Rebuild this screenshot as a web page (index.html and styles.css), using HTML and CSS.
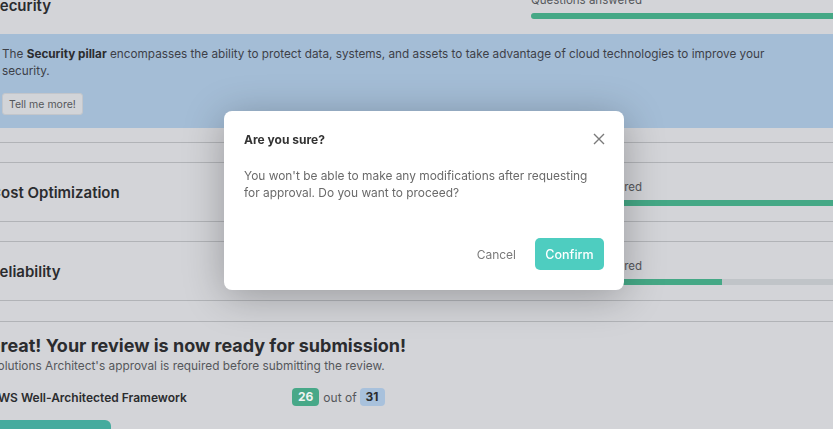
FILE: index.html
```html
<!DOCTYPE html>
<html>
<head>
<meta charset="utf-8">
<link rel="stylesheet" href="styles.css">
</head>
<body>
<div class="page">
  <section class="pillar">
    <div class="pillar-head">
      <h2 class="pillar-title">Security</h2>
      <div class="progress">
        <div class="progress-label">Questions answered</div>
        <div class="track"><div class="fill" style="width:100%"></div></div>
      </div>
    </div>
    <div class="pillar-body">
      <div class="info">
        <p class="info-text">The <b>Security pillar</b> encompasses the ability to protect data, systems, and assets to take advantage of cloud technologies to improve your security.</p>
        <button class="more">Tell me more!</button>
      </div>
    </div>
  </section>
  <section class="pillar">
    <div class="pillar-head">
      <h2 class="pillar-title">Cost Optimization</h2>
      <div class="progress">
        <div class="progress-label">Questions answered</div>
        <div class="track"><div class="fill" style="width:100%"></div></div>
      </div>
    </div>
  </section>
  <section class="pillar">
    <div class="pillar-head">
      <h2 class="pillar-title">Reliability</h2>
      <div class="progress">
        <div class="progress-label">Questions answered</div>
        <div class="track"><div class="fill" style="width:58%"></div></div>
      </div>
    </div>
  </section>
  <section class="summary">
    <h1 class="summary-title">Great! Your review is now ready for submission!</h1>
    <p class="summary-note">Solutions Architect's approval is required before submitting the review.</p>
    <div class="score-row">
      <span class="fw-name">AWS Well-Architected Framework</span>
      <span class="badge badge-green">26</span>
      <span class="out-of">out of</span>
      <span class="badge badge-blue">31</span>
    </div>
    <button class="request">Request for approval</button>
  </section>
</div>

<div class="modal">
  <div class="modal-head">
    <h3 class="modal-title">Are you sure?</h3>
    <svg class="close" width="12" height="12" viewBox="0 0 12 12"><path d="M1 1L11 11M11 1L1 11" stroke="#7a7a7a" stroke-width="1.4" fill="none"/></svg>
  </div>
  <p class="modal-text">You won't be able to make any modifications after requesting for approval. Do you want to proceed?</p>
  <div class="modal-foot">
    <button class="btn-cancel">Cancel</button>
    <button class="btn-confirm">Confirm</button>
  </div>
</div>
</body>
</html>
```

FILE: styles.css
```css
* { box-sizing: border-box; }

body {
  margin: 0;
  width: 833px;
  height: 429px;
  overflow: hidden;
  background: #d3d4d8;
  font-family: Inter, "Open Sans", sans-serif;
  color: #2b2c2f;
}

.page {
  margin: -25px 0 0 -10px;
  width: 880px;
}

.pillar {
  border-top: 1px solid #b1b3b7;
  border-bottom: 1px solid #b1b3b7;
  margin-bottom: 19px;
}

.pillar-head {
  height: 58px;
  display: grid;
  grid-template-columns: 541px 330px;
  align-items: center;
}

.pillar-title {
  margin: 0;
  font-size: 15px;
  font-weight: 600;
  color: #2b2c2f;
}

.progress-label {
  font-size: 11.5px;
  line-height: 16px;
  color: #55575b;
  margin-bottom: 5px;
}

.track {
  height: 6px;
  background: #c0c4c8;
  border-radius: 3px 0 0 3px;
  overflow: hidden;
}

.fill {
  height: 100%;
  background: #45a886;
}

.pillar-body {
  padding-bottom: 14px;
}

.info {
  background: #a4bdd6;
  padding: 12px 12px 13px 12px;
}

.info-text {
  margin: 0;
  font-size: 11.75px;
  line-height: 17px;
  color: #3d4048;
  max-width: 775px;
}

.info-text b {
  font-weight: 700;
  color: #2b2c2f;
}

.more {
  margin-top: 13px;
  height: 22px;
  padding: 0 6px;
  background: #d2d4d8;
  border: 1px solid #c3c6cb;
  border-radius: 3px;
  font-family: inherit;
  font-size: 10.5px;
  color: #55575b;
}

.summary {
  border-top: 1px solid #b1b3b7;
  padding-top: 13px;
  margin-top: 20px;
}

.summary-title {
  margin: 0 0 0 -3px;
  font-size: 18px;
  line-height: 22px;
  font-weight: 700;
  color: #2b2c2f;
}

.summary-note {
  margin: 1px 0 0;
  font-size: 11.85px;
  line-height: 16px;
  color: #55575b;
}

.score-row {
  margin-top: 14px;
  display: flex;
  align-items: center;
  height: 18px;
}

.fw-name {
  width: 302px;
  font-size: 12px;
  font-weight: 600;
  color: #2b2c2f;
}

.badge {
  height: 18px;
  line-height: 18px;
  padding: 0 6px;
  border-radius: 4px;
  font-size: 12px;
  font-weight: 700;
}

.badge-green {
  background: #47a888;
  color: #eef4f1;
}

.badge-blue {
  background: #a8c1dc;
  color: #2b2c2f;
}

.out-of {
  font-size: 12px;
  color: #55575b;
  margin: 0 3px 0 4px;
}

.request {
  display: block;
  margin-top: 14px;
  width: 121px;
  height: 46px;
  border: 0;
  border-radius: 6px;
  background: #45ab9e;
  color: #eef4f1;
  font-family: inherit;
  font-size: 12px;
}

.modal {
  position: fixed;
  left: 224px;
  top: 111px;
  width: 400px;
  height: 179px;
  background: #fff;
  border-radius: 8px;
  box-shadow: 0 6px 40px rgba(0, 0, 0, 0.28);
  display: flex;
  flex-direction: column;
  padding: 20px 20px 20px 20px;
}

.modal-head {
  display: flex;
  align-items: center;
  justify-content: space-between;
  height: 16px;
}

.modal-title {
  margin: 0;
  font-size: 12px;
  font-weight: 700;
  color: #333;
}

.close {
  margin-right: -1px;
}

.modal-text {
  margin: 20px 0 0;
  padding-right: 8px;
  font-size: 11.9px;
  line-height: 17px;
  color: #6a6a6a;
}

.modal-foot {
  margin-top: auto;
  display: flex;
  justify-content: flex-end;
  align-items: center;
}

.btn-cancel {
  background: none;
  border: 0;
  padding: 0 10px;
  margin-right: 9px;
  font-family: inherit;
  font-size: 12px;
  color: #7a7a7a;
}

.btn-confirm {
  width: 69px;
  height: 32px;
  border: 0;
  border-radius: 5px;
  background: #4ecdc0;
  color: #fff;
  font-family: inherit;
  font-size: 12.5px;
  font-weight: 500;
}
```
